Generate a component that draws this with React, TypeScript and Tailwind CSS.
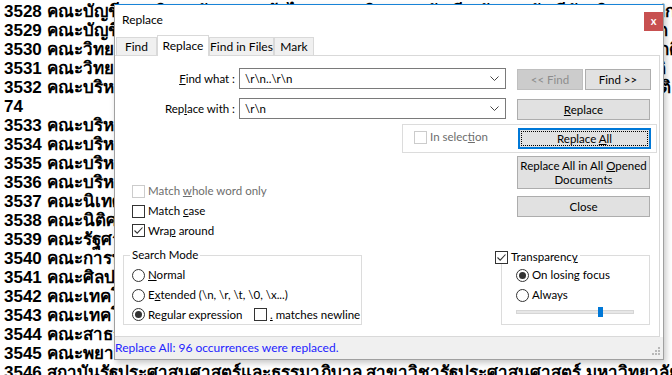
import React from 'react';

const editorLines = [
  '3528 คณะบัญชี มหาวิทยาลัยหอการค้าไทย สาขาวิชาการบัญชี หลักสูตรบัญชีบัณฑิต ภาคปกติ',
  '3529 คณะบัญชี มหาวิทยาลัยหอการค้าไทย สาขาวิชาการบัญชีบริหาร หลักสูตรบัญชีบัณฑิต',
  '3530 คณะวิทยาศาสตร์ มหาวิทยาลัยหอการค้าไทย สาขาวิชาวิทยาการคอมพิวเตอร์ ภาคปกติ',
  '3531 คณะวิทยาศาสตร์ มหาวิทยาลัยหอการค้าไทย สาขาวิชาวิศวกรรมซอฟต์แวร์ ภาคปกติ',
  '3532 คณะบริหารธุรกิจ มหาวิทยาลัยหอการค้าไทย สาขาวิชาการจัดการ หลักสูตรนานาชาติ',
  '74',
  '3533 คณะบริหารธุรกิจ มหาวิทยาลัยหอการค้าไทย สาขาวิชาการตลาด ภาคปกติ',
  '3534 คณะบริหารธุรกิจ มหาวิทยาลัยหอการค้าไทย สาขาวิชาการเงิน ภาคปกติ 2',
  '3535 คณะบริหารธุรกิจ มหาวิทยาลัยหอการค้าไทย สาขาวิชาการจัดการธุรกิจ',
  '3536 คณะบริหารธุรกิจ มหาวิทยาลัยหอการค้าไทย สาขาวิชาการจัดการโลจิสติกส์',
  '3537 คณะนิเทศศาสตร์ มหาวิทยาลัยหอการค้าไทย สาขาวิชาการโฆษณา ภาคปกติ 3',
  '3538 คณะนิติศาสตร์ มหาวิทยาลัยหอการค้าไทย สาขาวิชานิติศาสตร์ ภาคปกติ',
  '3539 คณะรัฐศาสตร์ มหาวิทยาลัยหอการค้าไทย สาขาวิชารัฐศาสตร์ ภาคปกติ',
  '3540 คณะการท่องเที่ยวและบริการ มหาวิทยาลัยหอการค้าไทย สาขาวิชาการโรงแรม',
  '3541 คณะศิลปศาสตร์ มหาวิทยาลัยหอการค้าไทย สาขาวิชาภาษาอังกฤษ ภาคปกติ',
  '3542 คณะเทคโนโลยีสารสนเทศ มหาวิทยาลัยหอการค้าไทย สาขาวิชาเทคโนโลยี (0)',
  '3543 คณะเทคโนโลยีสารสนเทศ มหาวิทยาลัยหอการค้าไทย สาขาวิชามัลติมีเดีย 1',
  '3544 คณะสาธารณสุขศาสตร์ มหาวิทยาลัยชินวัตร สาขาวิชาสาธารณสุขชุมชน อ',
  '3545 คณะพยาบาลศาสตร์ มหาวิทยาลัยชินวัตร สาขาวิชาพยาบาลศาสตร์ ภาคปกติ 0',
  '3546 สถาบันรัฐประศาสนศาสตร์และธรรมาภิบาล สาขาวิชารัฐประศาสนศาสตร์ มหาวิทยาลัยชินวัตร',
];

const CheckBox = ({ checked, disabled }: { checked?: boolean; disabled?: boolean }) => (
  <span
    className={
      disabled
        ? 'flex h-[13px] w-[13px] shrink-0 items-center justify-center border border-[#cccccc] bg-white'
        : 'flex h-[13px] w-[13px] shrink-0 items-center justify-center border border-[#333333] bg-white'
    }
  >
    {checked && (
      <svg width="11" height="11" viewBox="0 0 11 11">
        <path d="M1.5 5.5 L4.2 8.2 L9.5 2.5" fill="none" stroke="#333333" strokeWidth="1.1" />
      </svg>
    )}
  </span>
);

const Radio = ({ checked }: { checked?: boolean }) => (
  <span className="flex h-[13px] w-[13px] shrink-0 items-center justify-center rounded-full border border-[#333333] bg-white">
    {checked && <span className="h-[7px] w-[7px] rounded-full bg-[#333333]" />}
  </span>
);

const Combo = ({ value }: { value: string }) => (
  <div className="ml-[4px] flex h-[21px] w-[267px] items-center justify-between border border-[#7a7a7a] bg-white pl-[5px] pr-[6px]">
    <span>{value}</span>
    <svg width="9" height="6" viewBox="0 0 9 6">
      <path d="M0.5 0.5 L4.5 4.5 L8.5 0.5" fill="none" stroke="#444444" strokeWidth="1" />
    </svg>
  </div>
);

const Tab = ({ label, width, active }: { label: string; width: string; active?: boolean }) => (
  <div
    className={
      active
        ? 'relative z-10 -mb-px flex h-[21px] items-center justify-center border border-b-0 border-[#d9d9d9] bg-white pb-[1px]'
        : 'flex h-[18px] items-center justify-center border border-b-0 border-[#d9d9d9] bg-[#f0f0f0]'
    }
    style={{ width }}
  >
    {label}
  </div>
);

const btn = 'flex items-center justify-center border border-[#adadad] bg-[#e1e1e1] text-center';

export default function App() {
  return (
    <div className="relative h-[375px] w-[672px] overflow-hidden bg-white">
      {/* editor text behind the dialog */}
      <div className="pl-[4px] pt-[2px] font-['Liberation_Sans','Noto_Sans',sans-serif] text-[17px] font-bold text-black">
        {editorLines.map((line, i) => (
          <div key={i} className="h-[19px] whitespace-nowrap leading-[19px]">
            {line}
          </div>
        ))}
      </div>

      {/* Replace dialog */}
      <div className="absolute left-[114px] top-[4px] flex h-[356px] w-[550px] flex-col whitespace-nowrap border border-[#a0a0a0] border-t-[#1883d7] bg-white font-['Lato',sans-serif] text-[11.5px] text-black shadow-[2px_3px_6px_rgba(0,0,0,0.22)]">
        {/* title bar */}
        <div className="flex h-[30px] justify-between">
          <span className="self-center pl-[7px] text-[12px]">Replace</span>
          <div className="mt-[7px] flex h-[19px] w-[19px] items-center justify-center bg-[#c75050] pb-[2px] text-[11px] font-bold leading-none text-white">
            x
          </div>
        </div>

        {/* tabs */}
        <div className="flex h-[20px] items-end pl-[1px] text-[12px]">
          <Tab label="Find" width="41px" />
          <Tab label="Replace" width="52px" active />
          <Tab label="Find in Files" width="65px" />
          <Tab label="Mark" width="40px" />
        </div>

        {/* tab panel */}
        <div className="mr-[3px] h-[282px] border-b border-r border-t border-[#d9d9d9] pt-[12px]">
          <div className="flex items-start">
            <span className="w-[120px] text-right leading-[21px]">
              <u>F</u>ind what :
            </span>
            <Combo value="\r\n..\r\n" />
            <div className="ml-[11px] mt-[1px] flex gap-[2px]">
              <div className="flex h-[21px] w-[66px] items-center justify-center border border-[#bfbfbf] bg-[#cccccc] text-[#8c8c8c]">
                &lt;&lt; Find
              </div>
              <div className={`${btn} h-[21px] w-[66px]`}>Find &gt;&gt;</div>
            </div>
          </div>

          <div className="mt-[8px] flex items-start">
            <span className="w-[120px] text-right leading-[21px]">
              Rep<u>l</u>ace with :
            </span>
            <Combo value="\r\n" />
            <div className={`${btn} ml-[11px] mt-[1px] h-[21px] w-[133px]`}>
              <span>
                <u>R</u>eplace
              </span>
            </div>
          </div>

          <div className="ml-[287px] mt-[4px] flex h-[29px] w-[255px] items-center justify-between border border-[#dcdcdc] pl-[11px] pr-[5px]">
            <div className="-mt-[3px] flex items-center gap-[3px] text-[#6d6d6d]">
              <CheckBox disabled />
              <span>
                In selec<u>t</u>ion
              </span>
            </div>
            <div className="flex h-[21px] w-[133px] items-center justify-center border border-[#0078d7] bg-[#e1e1e1] p-[2px] shadow-[inset_0_0_0_1px_#0078d7]">
              <div className="flex h-full w-full items-center justify-center outline-1 outline-dotted outline-offset-[-1px] outline-black">
                <span>
                  Replace <u>A</u>ll
                </span>
              </div>
            </div>
          </div>

          <div className="flex h-[98px] items-start">
            <div className="w-[402px] pl-[17px] pt-[28px]">
              <div className="flex h-[20px] items-center gap-[3px] text-[#6d6d6d]">
                <CheckBox disabled />
                <span>
                  Match <u>w</u>hole word only
                </span>
              </div>
              <div className="flex h-[20px] items-center gap-[3px]">
                <CheckBox />
                <span>
                  Match <u>c</u>ase
                </span>
              </div>
              <div className="flex h-[19px] items-center gap-[3px]">
                <CheckBox checked />
                <span>
                  Wra<u>p</u> around
                </span>
              </div>
            </div>
            <div className="w-[133px] pt-[3px]">
              <div className={`${btn} h-[33px] w-[133px] leading-[14px]`}>
                <span>
                  Replace All in All <u>O</u>pened
                  <br />
                  Documents
                </span>
              </div>
              <div className={`${btn} mt-[7px] h-[21px] w-[133px]`}>Close</div>
            </div>
          </div>

          <div className="flex items-start">
            {/* search mode */}
            <div className="relative ml-[8px] mt-[4px] h-[70px] w-[239px] border border-[#dcdcdc] pl-[8px] pt-[9px]">
              <span className="absolute left-[6px] top-[-8px] bg-white px-[2px] leading-[14px]">Search Mode</span>
              <div className="flex h-[20px] items-center gap-[3px]">
                <Radio />
                <span>
                  <u>N</u>ormal
                </span>
              </div>
              <div className="flex h-[20px] items-center gap-[3px]">
                <Radio />
                <span>
                  E<u>x</u>tended (\n, \r, \t, \0, \x...)
                </span>
              </div>
              <div className="flex h-[19px] items-center">
                <div className="flex w-[122px] items-center gap-[3px]">
                  <Radio checked />
                  <span>
                    Re<u>g</u>ular expression
                  </span>
                </div>
                <div className="flex items-center gap-[3px]">
                  <CheckBox />
                  <span>
                    <u>.</u> matches newline
                  </span>
                </div>
              </div>
            </div>

            {/* transparency */}
            <div className="relative ml-[139px] mt-[4px] h-[70px] w-[149px] border border-[#dcdcdc] pl-[14px] pt-[9px]">
              <div className="absolute left-[-7px] top-[-6px] flex h-[14px] items-center gap-[3px] bg-white pr-[2px]">
                <CheckBox checked />
                <span>
                  Transparenc<u>y</u>
                </span>
              </div>
              <div className="flex h-[20px] items-center gap-[3px]">
                <Radio checked />
                <span>On losing focus</span>
              </div>
              <div className="flex h-[20px] items-center gap-[3px]">
                <Radio />
                <span>Always</span>
              </div>
              <div className="relative mt-[5px] h-[4px] w-[118px] border border-[#d6d6d6] bg-[#e7e7e7]">
                <div className="absolute left-[81px] top-[-4px] h-[10px] w-[5px] bg-[#0078d7]" />
              </div>
            </div>
          </div>
        </div>

        {/* status bar */}
        <div className="flex h-[22px] items-center justify-between bg-[#f0f0f0]">
          <span className="text-[12px] text-[#2323ff]">Replace All: 96 occurrences were replaced.</span>
          <svg width="10" height="10" viewBox="0 0 10 10" className="mb-[-6px] mr-[2px]">
            <rect x="7" y="1" width="2" height="2" fill="#b8b8b8" />
            <rect x="4" y="4" width="2" height="2" fill="#b8b8b8" />
            <rect x="7" y="4" width="2" height="2" fill="#b8b8b8" />
            <rect x="1" y="7" width="2" height="2" fill="#b8b8b8" />
            <rect x="4" y="7" width="2" height="2" fill="#b8b8b8" />
            <rect x="7" y="7" width="2" height="2" fill="#b8b8b8" />
          </svg>
        </div>
      </div>
    </div>
  );
}
